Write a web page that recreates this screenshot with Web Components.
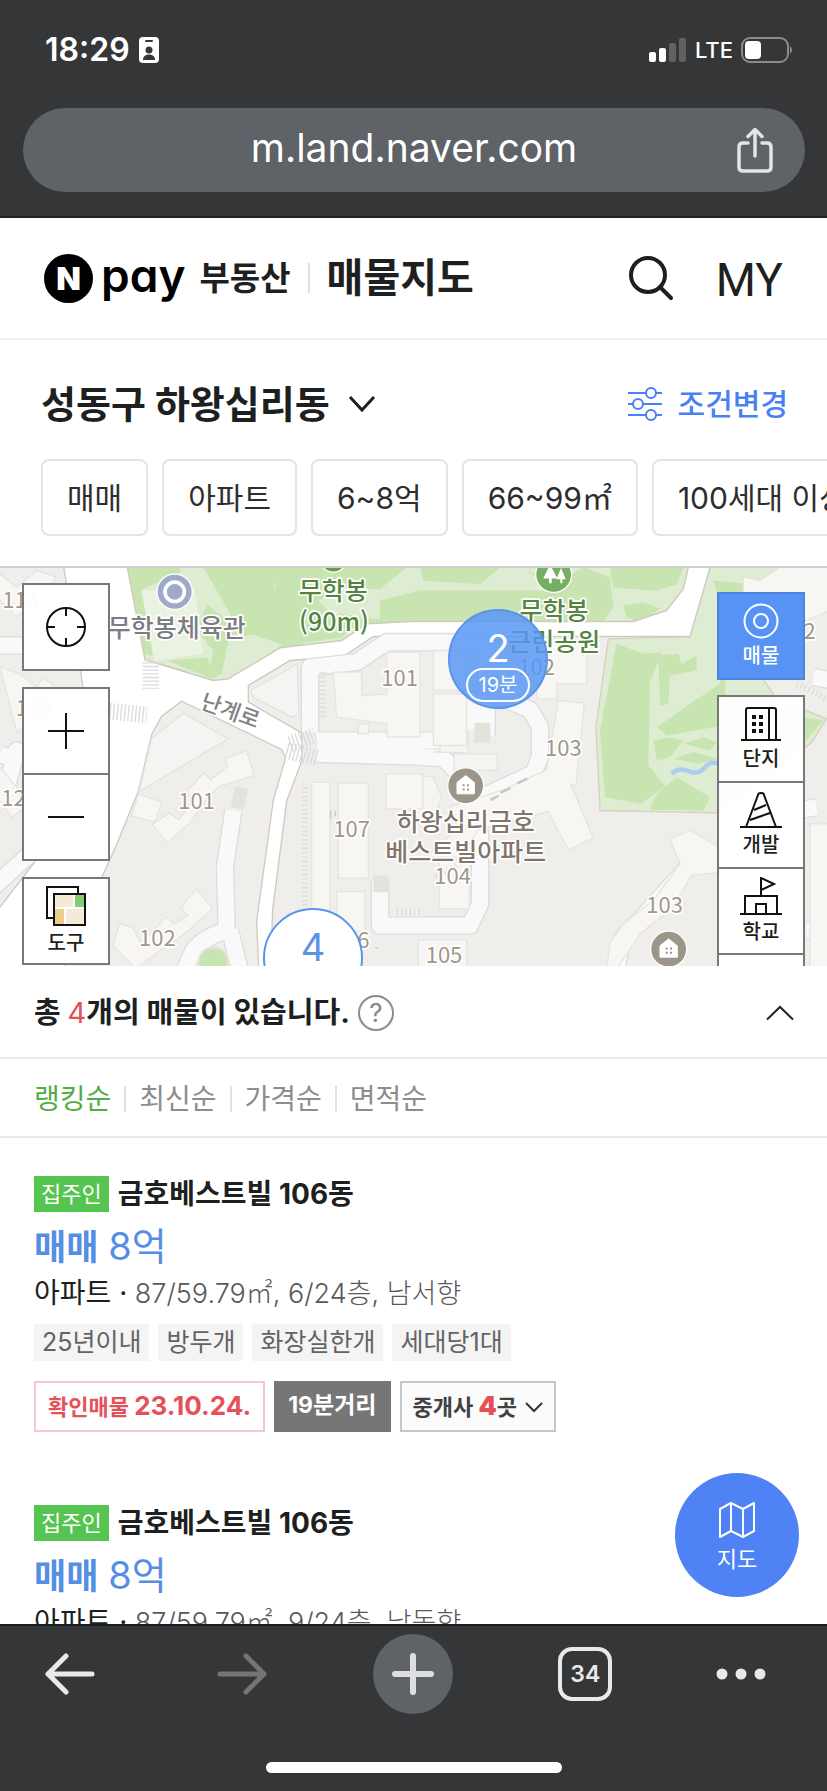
<!DOCTYPE html>
<html lang="ko">
<head>
<meta charset="utf-8">
<meta name="viewport" content="width=device-width, initial-scale=1">
<title>매물지도</title>
<style>
  body {
    margin: 0;
    font-family: Inter, "Noto Sans CJK KR", sans-serif;
    color: #1e1f21;
    background: #fff;
  }
</style>
</head>
<body>
<land-app></land-app>

<script>
const define = (name, html, setup) => {
    const template = document.createElement('template');
    template.innerHTML = `
<style>
  * { box-sizing: border-box; }
  svg { display: block; fill: none; }
  button {
    margin: 0;
    padding: 0;
    border: none;
    background: none;
    color: inherit;
    font: inherit;
    cursor: pointer;
  }
  a { color: inherit; text-decoration: none; }
</style>` + html;
    customElements.define(name, class extends HTMLElement {
        constructor() {
            super()
            this.attachShadow({ mode: "open" })
        }
        connectedCallback() {
            if (this.shadowRoot.firstChild) return;
            this.shadowRoot.appendChild(template.content.cloneNode(true))
            if (setup) setup(this, this.shadowRoot);
        }
    })
}

// ---------- browser chrome ----------
define('status-bar', /*html*/`
<style>
  :host {
    display: flex;
    justify-content: space-between;
    align-items: center;
    height: 100px;
    padding: 0 33px 0 45px;
    color: #fff;
  }
  div { display: flex; align-items: center; gap: 8px; }
  .time { font-size: 32px; font-weight: 600; line-height: 40px; }
  .net { font-size: 22px; font-weight: 500; line-height: 32px; }
</style>
<div>
  <span class="time">18:29</span>
  <svg width="22" height="28" viewBox="0 0 22 28">
    <rect x="1" y="1" width="20" height="26" rx="4" fill="#fff"/>
    <rect x="7" y="4" width="8" height="2" rx="1" fill="#353638"/>
    <circle cx="11" cy="14" r="3.500" fill="#353638"/>
    <path d="M5 24c0-4 3-5.500 6-5.500s6 1.500 6 5.500z" fill="#353638"/>
  </svg>
</div>
<div>
  <svg width="38" height="26" viewBox="0 0 38 26">
    <rect x="0" y="15" width="7" height="10" rx="2" fill="#fff"/>
    <rect x="10" y="11" width="7" height="14" rx="2" fill="#fff"/>
    <rect x="20" y="6" width="7" height="19" rx="2" fill="#606163"/>
    <rect x="30" y="1" width="7" height="24" rx="2" fill="#606163"/>
  </svg>
  <span class="net">LTE</span>
  <svg width="53" height="28" viewBox="0 0 53 28">
    <rect x="1" y="2" width="46" height="24" rx="8" stroke="#8b8c8d" stroke-width="2"/>
    <rect x="4" y="5" width="16" height="18" rx="4" fill="#fff"/>
    <path d="M49 10q4 4 0 8z" fill="#8b8c8d"/>
  </svg>
</div>`)

define('address-bar', /*html*/`
<style>
  :host { display: block; padding: 8px 22px 24px 23px; }
  div {
    display: grid;
    grid-template-columns: 1fr auto 1fr;
    align-items: center;
    height: 84px;
    padding: 0 32px;
    border-radius: 42px;
    background: #5f6266;
    color: #fff;
  }
  span {
    grid-column: 2;
    padding-bottom: 4px;
    font-size: 39px;
    line-height: 48px;
  }
  button { justify-self: end; }
</style>
<div>
  <span>m.land.naver.com</span>
  <button aria-label="공유">
    <svg width="36" height="46" viewBox="0 0 36 46" stroke="#e4e4e5" stroke-width="3.500" stroke-linecap="round" stroke-linejoin="round">
      <path d="M11 16H6q-4 0-4 4v20q0 4 4 4h24q4 0 4-4V20q0-4-4-4h-5"/>
      <path d="M18 29V3M11 9.500l7-7 7 7"/>
    </svg>
  </button>
</div>`)

define('browser-toolbar', /*html*/`
<style>
  :host {
    display: flex;
    flex: none;
    flex-direction: column;
    align-items: center;
    justify-content: space-between;
    height: 167px;
    padding: 8px 0 18px;
    border-top: 2px solid #1b1c1d;
    background: #353638;
    color: #e9e9ea;
  }
  nav {
    display: grid;
    grid-template-columns: repeat(5, 1fr);
    align-self: stretch;
    align-items: center;
    justify-items: center;
    height: 80px;
    margin: 0 -16px;
  }
  .add {
    display: grid;
    place-items: center;
    width: 80px;
    height: 80px;
    border-radius: 50%;
    background: #5f6266;
  }
  .tabs {
    width: 54px;
    height: 54px;
    border: 4px solid #e9e9ea;
    border-radius: 14px;
    font-size: 23px;
    font-weight: 600;
    line-height: 46px;
  }
  .more { padding-right: 32px; }
  .home { width: 296px; height: 11px; border-radius: 6px; background: #fff; }
</style>
<nav>
  <button aria-label="뒤로">
    <svg width="50" height="42" viewBox="0 0 50 42" stroke="#e9e9ea" stroke-width="5" stroke-linecap="round" stroke-linejoin="round"><path d="M47 21H3M21 3L3 21l18 18"/></svg>
  </button>
  <button aria-label="앞으로">
    <svg width="50" height="42" viewBox="0 0 50 42" stroke="#737475" stroke-width="5" stroke-linecap="round" stroke-linejoin="round"><path d="M3 21h44M29 3l18 18-18 18"/></svg>
  </button>
  <button class="add" aria-label="새 탭">
    <svg width="42" height="42" viewBox="0 0 42 42" stroke="#dededf" stroke-width="6" stroke-linecap="round"><path d="M21 3v36M3 21h36"/></svg>
  </button>
  <button class="tabs">34</button>
  <button class="more" aria-label="메뉴">
    <svg width="50" height="12" viewBox="0 0 50 12"><circle cx="6" cy="6" r="5.500" fill="#e9e9ea"/><circle cx="25" cy="6" r="5.500" fill="#e9e9ea"/><circle cx="44" cy="6" r="5.500" fill="#e9e9ea"/></svg>
  </button>
</nav>
<div class="home"></div>`)

// ---------- page header ----------
define('site-header', /*html*/`
<style>
  :host {
    display: flex;
    align-items: center;
    justify-content: space-between;
    height: 122px;
    padding: 0 44px;
    border-bottom: 2px solid #efefef;
  }
  .brand, .menu { display: flex; align-items: center; }
  .logo { display: flex; align-items: center; gap: 8px; color: #000; }
  .pay {
    font-size: 46px;
    font-weight: 600;
    line-height: 50px;
    font-feature-settings: "cv11";
    padding-bottom: 6px;
  }
  .service { margin-left: 14px; font-size: 33px; font-weight: 700; line-height: 44px; }
  i { width: 2px; height: 30px; margin: 0 17px; background: #e0e0e0; }
  h1 { margin: 0; font-size: 40px; font-weight: 700; line-height: 48px; }
  .menu { gap: 42px; font-family: Roboto, sans-serif; font-size: 46px; line-height: 52px; }
  .menu a { padding-top: 4px; }
</style>
<div class="brand">
  <a class="logo" href="#">
    <svg width="49" height="49" viewBox="0 0 49 49">
      <circle cx="24.500" cy="24.500" r="24.500" fill="#000"/>
      <text x="24.500" y="36" text-anchor="middle" font-family="Inter" font-size="32" font-weight="900" fill="#fff">N</text>
    </svg>
    <span class="pay">pay</span>
  </a>
  <a class="service" href="#">부동산</a>
  <i></i>
  <h1>매물지도</h1>
</div>
<div class="menu">
  <button aria-label="검색">
    <svg width="46" height="46" viewBox="0 0 46 46" stroke="#1e1f21" stroke-width="4" stroke-linecap="round"><circle cx="20" cy="20" r="17"/><path d="M32 32l11 11"/></svg>
  </button>
  <a href="#">MY</a>
</div>`)

define('region-bar', /*html*/`
<style>
  :host {
    display: flex;
    align-items: center;
    justify-content: space-between;
    padding: 39px 39px 30px 41px;
  }
  button { display: flex; align-items: center; }
  .region { gap: 18px; font-size: 38px; font-weight: 700; line-height: 50px; }
  .filter { gap: 16px; color: #4a7ff5; font-size: 30px; font-weight: 500; line-height: 40px; }
</style>
<button class="region"><slot></slot>
  <svg width="28" height="18" viewBox="0 0 28 18" stroke="#1e1f21" stroke-width="3"><path d="M2 2l12 13L26 2"/></svg>
</button>
<button class="filter">
  <svg width="34" height="36" viewBox="0 0 34 36" stroke="#4a7ff5" stroke-width="2">
    <path d="M0 7h18m10 0h6M0 18h5m10 0h19M0 29h18m10 0h6"/>
    <circle cx="23" cy="7" r="5"/><circle cx="10" cy="18" r="5"/><circle cx="23" cy="29" r="5"/>
  </svg>
  조건변경
</button>`)

define('filter-chips', /*html*/`
<style>
  :host { display: flex; gap: 14px; padding: 0 0 30px 41px; overflow: hidden; }
</style>
<slot></slot>`)

define('filter-chip', /*html*/`
<style>
  :host { display: block; flex: none; }
  button {
    height: 77px;
    padding: 0 24px;
    border: 2px solid #e4e4e4;
    border-radius: 8px;
    background: #fff;
    color: #2c2d2f;
    font-size: 30px;
    line-height: 40px;
    white-space: nowrap;
  }
</style>
<button><slot></slot></button>`)

// ---------- map ----------
const home = (x, y) => `
<g transform="translate(${x} ${y})">
  <circle r="54" fill="#9d948a" stroke="#fff" stroke-width="4"/>
  <path d="M-26 24V-10L0-31 26-10V24z" fill="#fff" stroke="#fff" stroke-linejoin="round" stroke-width="3"/>
  <path d="M-9-5h6v6h-6zM4-5h6v6h-6zM-9 8h6v6h-6zM4 8h6v6h-6z" fill="#9d948a"/>
</g>`;

const numbers = [
    [62, 142, "114"], [102, 465, "113"], [22, 737, "112"], [590, 745, "101"], [472, 1155, "102"],
    [1199, 375, "101"], [1055, 830, "107"], [1090, 1162, "6"], [1610, 342, "102"], [1690, 586, "103"],
    [1358, 970, "104"], [1332, 1208, "105"], [1994, 1056, "103"], [2429, 236, "2"]
].map(([x, y, n]) => `<text x="${x}" y="${y}">${n}</text>`).join("");

define('street-map', /*html*/`
<style>
  :host { display: block; position: absolute; inset: 0; background: #efeeea; }
  svg { width: 100%; height: 100%; }
  text { font-family: "Noto Sans CJK KR", sans-serif; text-anchor: middle; paint-order: stroke; stroke: #fff; stroke-width: 10; stroke-linejoin: round; }
  .num { font-size: 66px; }
  .num text { fill: #a0978d; }
  .place { font-size: 75px; font-weight: 500; }
  .lane { stroke-linejoin: round; }
  .bld { fill: #f7f6f3; stroke: #e6e4df; stroke-width: 4; }
  .pale { fill: #f4f4f3; stroke: #e4e3e0; stroke-width: 4; }
</style>
<svg viewBox="0 21 2481 1197" preserveAspectRatio="xMidYMid slice">
  <!-- parks -->
  <path fill="#deecd1" stroke="#cfcabf" stroke-width="3" d="M378 0l57 298 55 14 150 48 45-5 155-93 185-22 75-50 130-7h670l100-33 50-65 20-85z"/>
  <g fill="#c7e4b1">
    <path d="M378 0h170l-10 40-110 45 30 200-25-5zM500 300l120-8 30 60h-20z"/>
    <path d="M610 21l70 120 30 60-90-70-30 80 50 60-15 85 40-15 20-100 70-20 90 30-120 110 100-65 90-50 110-15 70-60-80 10-60-60 120-80-150-80-50 20-50 110-20-110-60 40-60-100z"/>
    <path d="M690 21h60l60 75-20 10zM800 21h80l-50 60zM900 21l60 60 180 5 80-65zM960 190l60-30 140 20-50 30zM1140 120l120-30h370l120-70 80 30 10 90-40 60h-660zM1260 21h240l-60 50-170-10zM1580 35l130 10-40 20zM1830 21h220l-20 50-60 20-130-10zM1870 135l60-10 50 20-60 40-40-15z"/>
  </g>
  <path fill="#eaf3e2" d="M424 90l160-10 25 200-145 22z"/>
  <path fill="#deecd1" stroke="#d5d0c6" stroke-width="4" d="M1825 235l245-7 63-228h240l-45 80-60-5-8 240 70 100 150 60-45 70-280 212-355-7-12-250z"/>
  <g fill="#c7e4b1">
    <path d="M1850 250l80 30 55-5-35 90-5 250 50 60-70 55-110-20-15-200z"/>
    <path d="M1975 285l60-5 10 30 45-25v45l-80 15-5 85-25 5zM2140 60l40 140-20 170-90 60-100 70 30 25 170-30 10-200 120 40v-260zM1960 540l50-10 40 10-40 50-40 10zM2050 550l60-20 40 15-20 25zM1970 700l60-50 100 60-20 40-160-2z"/>
    <path d="M2020 595l60-20 75 20-60 15zM2410 470l60 10-60 70z"/>
  </g>
  <path stroke="#adcdf0" stroke-width="14" d="M2015 640q20-20 50-8t50-12 50-6 40 10 30-10"/>
  <!-- avenue -->
  <path fill="#fff" stroke="#cfc9c0" stroke-width="4" d="M188 0h190l57 298 205 62 45-5 155-93 185-22 75-50 130-7h670l100-33 50-65 20-85h66l-66 228H1120l-90 60-160 12-125 75v50l160 92 0 85-45 120-42 325-8 220h-32l-8-185 50-363 37-127-12-25-300-145-60 45-30 55-40 170-65 160-50 110-135 320H-40v-200L0 1040l100-130 90-150 55-260 5-115z"/>
  <!-- complex lanes -->
  <g class="lane" stroke="#dcdde0" stroke-width="56">
    <path d="M0 255H210M0 580q40 20 50-10l-30 110M-20 980l110-100"/>
    <path d="M930 515V320l140-15 90-60h300v280M950 540h420M950 580l300 8 80 5 70 70 50 45 150-70 20-50v-90l-30-50-70-30h-100v90"/>
    <path d="M1400 690l40 130v210l-30 65H1140V960M700 750l-25 170 5 190q-70 20-100 60l-40 90M690 1110l30 120M2450 740l-120 20M2440 350l60 10 40-50M1850 1218l20-90 60-60 170-190M2420 1110q60 0 80 80"/>
  </g>
  <g class="lane" stroke="#f9f9f9" stroke-width="48">
    <path d="M0 255H210M0 580q40 20 50-10l-30 110M-20 980l110-100"/>
    <path d="M930 515V320l140-15 90-60h300v280M950 540h420M950 580l300 8 80 5 70 70 50 45 150-70 20-50v-90l-30-50-70-30h-100v90"/>
    <path d="M1400 690l40 130v210l-30 65H1140V960M700 750l-25 170 5 190q-70 20-100 60l-40 90M690 1110l30 120M2450 740l-120 20M2440 350l60 10 40-50M1850 1218l20-90 60-60 170-190M2420 1110q60 0 80 80"/>
  </g>
  <!-- buildings -->
  <path class="pale" d="M550 458l135 77-268 158 38-160zM752 390l140-80 5 150-20 10-115-58z"/>
  <path class="pale" d="M1300 575l20-3v-55h85v60zM1305 490h65v-30h-65zM1362 580h130v50h-130zM1230 640l70 10 25 60-30 80h-65z"/>
  <path class="bld" d="M675 595l65-25 22 75-60 20-40 10-35 30-55 80-70 62-45-55 50-35 30 20 45-55-20-30 50-55 20 20 50-40zM415 700l70 25-20 60-70-18zM590 985l48 60-90 80-60 40-80 60-70-70 20-65 40 10 25 50 75-80 25 20 40-25-20-25zM0 320l60 20 50 40 20-30 30 25-60 100-50 40zM0 620l50 60 25 60-40 30-45-60zM0 40l50 40 60-50 60 20-60 70-60 50-60-60z"/>
  <path class="bld" d="M1000 335h85v70l75-5v-125h100v255h-100v-40l-150-20zM1015 668h90v285h-90zM935 665h55v390h-55zM1010 993h85v120h-85zM1158 640h110v105h-110zM1075 490h30v30h-30zM1300 270h100v120h-100zM1300 400h100v155h-100zM1550 250h210v120h-90v45h-60v-80h-60z"/>
  <path class="bld" d="M1675 420l78 8-25 245h-15l67 160-75 35-60-115-210 55-60 90-95-10 100-90-30-60 160-50 130-60zM1318 890h90v155h-90zM1255 1138h145v90h-145zM2010 835l60-25 80 45 20 80-95 10-60 100-90 70-75 110h-30l10-80 40-55 90-70 80-110zM2430 790h60v430h-60zM2230 50l50 10 60-40h150v130l-70 30-190-60z"/>
  <path fill="#e4e2dc" d="M705 678l40 8-15 62-38-8zM1120 945h45v50h-45zM1423 487h48v60h-48z"/>
  <path fill="#c9c8c4" d="M1500 692l30-12 3 6-30 14zM1550 665l30-15 3 8-30 14zM1470 715l25-12 2 6-24 14zM990 750h4v24h-4zM1004 752h4v14h-4zM1125 1160h10v4h-10z"/>
  <path stroke="#dedddb" stroke-width="20" stroke-dasharray="4 9" d="M968 335v135M915 680v370M1190 1055h70M1310 950l110-65M2390 370l90 45"/>
  <!-- crossings -->
  <g stroke="#dadadc" stroke-width="50" stroke-dasharray="4 7">
    <path d="M452 305v80M285 448l155 15M870 550l75-25M860 570l95 25"/>
  </g>
  <circle cx="640" cy="1205" r="44" fill="#c7e4b1" stroke="#e3e2df" stroke-width="6"/>
  <!-- pins -->
  <circle cx="524" cy="94" r="53" fill="#9fa9ca" stroke="#fff" stroke-width="4"/>
  <circle cx="524" cy="94" r="29" stroke="#fff" stroke-width="11"/>
  <circle cx="1000" cy="-5" r="40" fill="#5f9e4a" stroke="#fff" stroke-width="4"/>
  <circle cx="1661" cy="42" r="54" fill="#76ae63" stroke="#fff" stroke-width="4"/>
  <path fill="#fff" d="M1650 12l22 42h-17v14h-8V54h-17zM1683 22l14 34h-10v12h-6V56h-12z"/>
  ${home(1397, 676)}${home(2006, 1166)}
  <g class="num">${numbers}</g>
  <g class="place">
    <text x="530" y="228" fill="#7c7d82">무학봉체육관</text>
    <text x="690" y="474" fill="#828284" font-size="66" transform="rotate(20 690 455)">난계로</text>
    <g fill="#558341">
      <text x="1000" y="118">무학봉</text>
      <text x="1002" y="210">(90m)</text>
      <text x="1662" y="178">무학봉</text>
      <text x="1663" y="270">근린공원</text>
    </g>
    <g fill="#81766b">
      <text x="1397" y="812">하왕십리금호</text>
      <text x="1397" y="902">베스트빌아파트</text>
    </g>
  </g>
</svg>`)

define('map-button', /*html*/`
<style>
  :host {
    display: block;
    border: 2px solid #77787b;
    background: rgba(255, 255, 255, .96);
    color: #1e1f21;
    font-size: 20px;
    font-weight: 500;
  }
  :host([on]) { background: #5793f5; border-color: #4c84de; color: #fff; }
  button {
    display: flex;
    flex-direction: column;
    align-items: center;
    justify-content: center;
    gap: 4px;
    width: 84px;
    height: 84px;
    line-height: 26px;
  }
</style>
<button><slot name="icon"></slot><slot></slot></button>`, (el, root) => {
    if (el.title) root.querySelector("button").setAttribute("aria-label", el.title);
})

define('map-marker', /*html*/`
<style>
  :host {
    position: absolute;
    transform: translate(-50%, -50%);
  }
  button {
    display: flex;
    flex-direction: column;
    align-items: center;
    width: 100px;
    height: 100px;
    padding-top: 17px;
    border: 2px solid #5b93ea;
    border-radius: 50%;
    background: #fff;
    color: #5b93ea;
    font-size: 38px;
    line-height: 40px;
  }
  :host([visited]) button { background: rgba(87, 150, 245, .84); color: #fff; }
  small {
    display: none;
    padding: 0 11px;
    border: 2px solid #fff;
    border-radius: 18px;
    font-size: 20px;
    line-height: 30px;
  }
  :host([visited]) small { display: block; }
</style>
<button><slot></slot><small><slot name="walk"></slot></small></button>`)

define('map-panel', /*html*/`
<style>
  :host {
    display: block;
    position: relative;
    flex: none;
    height: 400px;
    overflow: hidden;
    border-top: 2px solid #cfcfcf;
  }
  .left, .right { position: absolute; display: flex; flex-direction: column; gap: 15px; }
  .left { top: 15px; left: 22px; gap: 16px; }
  .right { top: 24px; right: 22px; }
  .stack { display: flex; flex-direction: column; }
  .stack map-button + map-button { margin-top: -2px; }
</style>
<street-map></street-map>
<map-marker visited style="left: 498px; top: 91px">2<span slot="walk">19분</span></map-marker>
<map-marker style="left: 313px; top: 390px">4</map-marker>
<div class="left">
  <map-button title="현재 위치">
    <svg slot="icon" width="40" height="40" viewBox="0 0 40 40" fill="none" stroke="#111" stroke-width="2"><circle cx="20" cy="20" r="19"/><path d="M20 1v8M20 31v8M1 20h8M31 20h8"/></svg>
  </map-button>
  <div class="stack">
    <map-button title="확대"><svg slot="icon" width="36" height="36" viewBox="0 0 36 36" stroke="#111" stroke-width="2"><path d="M18 0v36M0 18h36"/></svg></map-button>
    <map-button title="축소"><svg slot="icon" width="36" height="36" viewBox="0 0 36 36" stroke="#111" stroke-width="2"><path d="M0 18h36"/></svg></map-button>
  </div>
  <map-button>
    <svg slot="icon" width="40" height="40" viewBox="0 0 40 40">
      <path d="M1 1h31v31H1z" fill="#fff" stroke="#111" stroke-width="2"/>
      <path d="M8 8h31v31H8z" fill="#fff" stroke="#111" stroke-width="2"/>
      <path d="M9 9h18v12H9zM20 23h18v15H20z" fill="#f3ead9"/>
      <path d="M29 9h9v12h-9z" fill="#83cd72"/>
      <path d="M9 23h9v15H9z" fill="#e8ce88"/>
    </svg>도구
  </map-button>
</div>
<div class="right">
  <map-button on>
    <svg slot="icon" width="36" height="36" viewBox="0 0 36 36" fill="none" stroke="#fff" stroke-width="2"><circle cx="18" cy="18" r="16.500"/><circle cx="18" cy="18" r="7"/></svg>매물
  </map-button>
  <div class="stack">
    <map-button>
      <svg slot="icon" width="40" height="36" viewBox="0 0 40 36" fill="none" stroke="#111" stroke-width="2">
        <path d="M0 34h40M5 34V4q0-2 2-2h26q2 0 2 2v30M28 2v32"/>
        <path d="M11 11h4M18 11h4M11 18h4M18 18h4M11 25h4M18 25h4" stroke-width="4"/>
      </svg>단지
    </map-button>
    <map-button>
      <svg slot="icon" width="42" height="36" viewBox="0 0 42 36" fill="none" stroke="#111" stroke-width="2"><path d="M0 35h42M6 35L18 3q0-2 3-2t3 2l12 32M14 18l12-5M10 28l20-7"/></svg>개발
    </map-button>
    <map-button>
      <svg slot="icon" width="42" height="38" viewBox="0 0 42 38" fill="none" stroke="#111" stroke-width="2"><path d="M0 37h42M5 37V19h32v18M16 37V27h10v10M21 19V1l13 6-13 6"/></svg>학교
    </map-button>
    <map-button title="더보기"></map-button>
  </div>
</div>`)

// ---------- results ----------
define('result-summary', /*html*/`
<style>
  :host {
    display: flex;
    flex: none;
    align-items: center;
    justify-content: space-between;
    height: 93px;
    padding: 2px 33px 0 34px;
    border-bottom: 2px solid #e9e9e9;
  }
  div { display: flex; align-items: center; gap: 8px; }
  h2 { margin: 0; font-size: 29px; font-weight: 700; line-height: 40px; }
  em { font-style: normal; font-weight: 400; color: #e3525a; }
  .help {
    width: 36px;
    height: 36px;
    border: 2px solid #8c8c8c;
    border-radius: 50%;
    color: #858585;
    font-size: 26px;
    line-height: 30px;
  }
</style>
<div>
  <h2>총 <em><slot></slot></em>개의 매물이 있습니다.</h2>
  <button class="help" aria-label="도움말">?</button>
</div>
<button aria-label="접기">
  <svg width="28" height="16" viewBox="0 0 28 16" stroke="#222" stroke-width="2"><path d="M1 14.500L14 2l13 12.500"/></svg>
</button>`)

define('sort-tabs', /*html*/`
<style>
  :host {
    display: flex;
    flex: none;
    align-items: center;
    height: 79px;
    padding: 2px 34px 0;
    border-bottom: 2px solid #e9e9e9;
    color: #8d8d8d;
    font-size: 28px;
    line-height: 40px;
  }
  button + button { display: flex; align-items: center; }
  button + button::before {
    content: "";
    width: 2px;
    height: 26px;
    margin: 0 13px;
    background: #e2e2e2;
  }
  .on { color: #52ad45; }
</style>
<button class="on">랭킹순</button><button>최신순</button><button>가격순</button><button>면적순</button>`)

define('listing-card', /*html*/`
<style>
  :host { display: block; }
  header { display: flex; align-items: center; gap: 9px; }
  .owner {
    padding: 0 7px;
    background: #56c450;
    color: #fff;
    font-size: 22px;
    line-height: 36px;
  }
  h3 { margin: 0; font-size: 28px; font-weight: 700; line-height: 36px; }
  .price { height: 44px; margin: 12px 0 0; color: #558fe4; font-size: 35px; font-weight: 400; line-height: 44px; }
  .price b { font-weight: 700; }
  .price span { font-size: 38px; }
  .spec { height: 36px; margin: 7px 0 0; color: #58595b; font-size: 27px; font-weight: 300; line-height: 36px; }
  .spec span { color: #1e1f21; font-size: 28px; font-weight: 400; }
  ul { display: flex; gap: 9px; margin: 13px 0 0; padding: 0; list-style: none; }
  li { padding: 0 8px; background: #f4f4f4; color: #626365; font-size: 25px; line-height: 37px; }
  footer { display: flex; gap: 9px; margin-top: 20px; font-size: 22px; font-weight: 700; line-height: 41px; }
  footer > * { height: 51px; padding: 2px 12px 0; border: 2px solid; }
  .checked { border-color: #f5c9cc; color: #e3525a; }
  .walk { border-color: #767676; background: #767676; color: #fff; font-size: 23px; }
  .agents { display: flex; align-items: center; gap: 8px; padding: 0 11px; border: 2px solid #c6c6c6; background: #fbfbfb; color: #404143; }
  .agents b { color: #e3525a; }
  .date, .agents b { font-size: 26px; }
</style>
<header><span class="owner">집주인</span><h3><slot></slot></h3></header>
<p class="price"><b>매매</b> <span><slot name="price"></slot></span></p>
<p class="spec"><span>아파트 ·</span> <slot name="spec"></slot></p>
<ul></ul>
<footer>
  <span class="checked">확인매물 <span class="date"><slot name="date"></slot></span></span>
  <span class="walk">19분거리</span>
  <button class="agents"><span>중개사 <b>4</b>곳</span>
    <svg width="18" height="12" viewBox="0 0 18 12" stroke="#333" stroke-width="2"><path d="M1 2l8 8 8-8"/></svg>
  </button>
</footer>`, (el, root) => {
    const ul = root.querySelector("ul");
    el.getAttribute("data-tags").split(",").forEach(tag => {
        const li = document.createElement("li");
        li.textContent = tag;
        ul.appendChild(li);
    })
})

define('map-fab', /*html*/`
<style>
  :host { display: block; position: absolute; right: 28px; bottom: 27px; }
  button {
    display: flex;
    flex-direction: column;
    align-items: center;
    justify-content: center;
    gap: 6px;
    width: 124px;
    height: 124px;
    padding-top: 6px;
    border-radius: 50%;
    background: #4f82f4;
    color: #fff;
    font-size: 22px;
    line-height: 30px;
  }
</style>
<button>
  <svg width="36" height="36" viewBox="0 0 36 36" stroke="#fff" stroke-width="2" stroke-linejoin="round"><path d="M1 7l11-6 12 6 11-6v28l-11 6-12-6-11 6zM12 1v28M24 7v28"/></svg>
  지도
</button>`)

define('result-list', /*html*/`
<style>
  :host { display: block; position: relative; flex: 1; min-height: 0; }
  section {
    display: flex;
    flex-direction: column;
    gap: 73px;
    height: 100%;
    padding: 38px 34px 0;
    overflow: hidden;
  }
</style>
<section><slot></slot></section>
<map-fab></map-fab>`)

define('land-app', /*html*/`
<style>
  :host { display: flex; flex-direction: column; height: 100vh; overflow: hidden; }
  .top { flex: none; background: #353638; border-bottom: 2px solid #1f2021; }
  .conditions { flex: none; }
  site-header, listing-card { flex: none; }
</style>
<div class="top">
  <status-bar></status-bar>
  <address-bar></address-bar>
</div>
<site-header></site-header>
<div class="conditions">
  <region-bar>성동구 하왕십리동</region-bar>
  <filter-chips>
    <filter-chip>매매</filter-chip>
    <filter-chip>아파트</filter-chip>
    <filter-chip>6~8억</filter-chip>
    <filter-chip>66~99㎡</filter-chip>
    <filter-chip>100세대 이상</filter-chip>
  </filter-chips>
</div>
<map-panel></map-panel>
<result-summary>4</result-summary>
<sort-tabs></sort-tabs>
<result-list>
  <listing-card data-tags="25년이내,방두개,화장실한개,세대당1대">
    금호베스트빌 106동
    <span slot="price">8억</span>
    <span slot="spec">87/59.79㎡, 6/24층, 남서향</span>
    <span slot="date">23.10.24.</span>
  </listing-card>
  <listing-card data-tags="25년이내,방두개,화장실한개,세대당1대">
    금호베스트빌 106동
    <span slot="price">8억</span>
    <span slot="spec">87/59.79㎡, 9/24층, 남동향</span>
    <span slot="date">23.10.24.</span>
  </listing-card>
</result-list>
<browser-toolbar></browser-toolbar>`)
</script>
</body>
</html>
